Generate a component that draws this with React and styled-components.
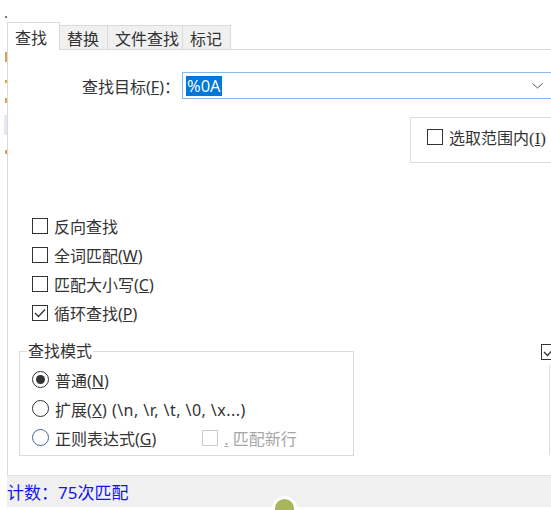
import styled, { createGlobalStyle } from "styled-components";

const GlobalStyle = createGlobalStyle`
  html, body {
    margin: 0;
    padding: 0;
    background: #ffffff;
  }
  body {
    font-family: "Noto Sans", "Noto Sans CJK SC", sans-serif;
    color: #222222;
  }
`;

const Page = styled.div`
  position: relative;
  width: 551px;
  height: 510px;
  display: flex;
  overflow: hidden;
  background: #ffffff;
  font-size: 16px;
`;

const Backdrop = styled.div`
  flex: none;
  width: 7px;
  display: flex;
  flex-direction: column;
  align-items: flex-end;
`;

const Mark = styled.span`
  display: block;
  width: ${(p) => p.w || 2}px;
  height: ${(p) => p.h}px;
  margin-top: ${(p) => p.top}px;
  background: ${(p) => p.color || "#e2a04a"};
`;

const Dialog = styled.div`
  flex: 1;
  min-width: 0;
  display: flex;
  flex-direction: column;
  padding-top: 22px;
`;

const TabBar = styled.div`
  display: flex;
  align-items: flex-end;
  height: 28px;
`;

const Tab = styled.div`
  box-sizing: border-box;
  flex: none;
  height: ${(p) => (p.active ? 28 : 25)}px;
  width: ${(p) => p.w}px;
  padding-left: 7px;
  display: flex;
  align-items: center;
  background: ${(p) => (p.active ? "#ffffff" : "#f0f0f0")};
  border: 1px solid #dadada;
  border-bottom: ${(p) => (p.active ? "none" : "1px solid #dadada")};
  border-left: ${(p) => (p.active ? "1px solid #dadada" : "none")};
  color: #333333;
  white-space: nowrap;
`;

const TabFiller = styled.div`
  flex: 1;
  border-bottom: 1px solid #dadada;
`;

const Panel = styled.div`
  height: 425px;
  border-left: 1px solid #dadada;
  display: flex;
  flex-direction: column;
  background: #ffffff;
`;

const FindRow = styled.div`
  display: flex;
  align-items: center;
  margin-top: 22px;
  height: 27px;
`;

const FieldLabel = styled.div`
  flex: none;
  width: 174px;
  padding-right: 2px;
  box-sizing: border-box;
  text-align: right;
  color: #333333;
  white-space: nowrap;
`;

const Combo = styled.div`
  box-sizing: border-box;
  flex: none;
  width: 375px;
  height: 27px;
  border: 1px solid #86b9ec;
  display: flex;
  align-items: center;
  padding-left: 3px;
`;

const Selected = styled.span`
  background: #0078d7;
  color: #ffffff;
  font-family: "Open Sans", "Noto Sans", sans-serif;
  font-size: 16.5px;
  line-height: 20px;
  padding: 0 1px;
`;

const Chevron = styled.svg`
  margin-left: auto;
  margin-right: 13px;
`;

const ScopeBox = styled.div`
  box-sizing: border-box;
  margin-top: 18px;
  margin-left: 402px;
  width: 160px;
  height: 46px;
  border: 1px solid #dcdcdc;
  padding: 4px 0 0 16px;
`;

const Options = styled.div`
  display: flex;
  flex-direction: column;
  margin-top: 48px;
  padding-left: 24px;
`;

const OptionRow = styled.label`
  display: flex;
  align-items: center;
  height: 29px;
  gap: 6px;
  white-space: nowrap;
  color: #333333;
`;

const Box = styled.span`
  box-sizing: border-box;
  flex: none;
  width: 16px;
  height: 16px;
  border: 1px solid ${(p) => (p.disabled ? "#cccccc" : "#333333")};
  background: #ffffff;
  display: flex;
  align-items: center;
  justify-content: center;
`;

const Round = styled.span`
  box-sizing: border-box;
  flex: none;
  width: 17px;
  height: 17px;
  border-radius: 50%;
  border: 1px solid ${(p) => p.tint || "#333333"};
  display: flex;
  align-items: center;
  justify-content: center;
  &::after {
    content: "";
    display: ${(p) => (p.checked ? "block" : "none")};
    width: 9px;
    height: 9px;
    border-radius: 50%;
    background: #333333;
  }
`;

const Latin = styled.span`
  font-family: ${(p) => (p.serif ? '"Liberation Serif", serif' : '"Noto Sans", sans-serif')};
  font-size: ${(p) => (p.serif ? 17 : 16)}px;
  letter-spacing: ${(p) => (p.wide ? 0.45 : 0)}px;
`;

const DimText = styled.span`
  color: #a6a6a6;
`;

const BottomRow = styled.div`
  display: flex;
  align-items: flex-start;
  margin-top: 14px;
`;

const ModeGroup = styled.fieldset`
  box-sizing: border-box;
  flex: none;
  margin: 0 0 0 11px;
  width: 335px;
  height: 115px;
  border: 1px solid #dcdcdc;
  padding: 4px 0 0 7px;
  legend {
    padding: 0 1px;
    line-height: 20px;
    color: #333333;
  }
`;

const RadioList = styled.div`
  display: flex;
  flex-direction: column;
  padding-left: 5px;
`;

const Spacer = styled.span`
  width: ${(p) => p.w}px;
  flex: none;
`;

const SideGroup = styled.div`
  flex: none;
  margin-left: 187px;
  margin-top: 3px;
  display: flex;
  flex-direction: column;
`;

const SideLine = styled.div`
  margin-top: 5px;
  margin-left: 8px;
  height: 90px;
  border-left: 1px solid #dcdcdc;
`;

const StatusBar = styled.div`
  box-sizing: border-box;
  height: 32px;
  background: #f0f0f0;
  border-top: 1px solid #e4e4e4;
  display: flex;
  align-items: center;
  color: #1414f0;
  font-size: 17px;
  white-space: nowrap;
`;

const Dot = styled.div`
  position: absolute;
  left: 272px;
  top: 496px;
  width: 19px;
  height: 19px;
  border-radius: 50%;
  background: #a9b55a;
  border: 3px solid #ffffff;
`;

const Check = () => (
  <svg width="12" height="10" viewBox="0 0 12 10">
    <polyline points="1,5 4.5,8.5 11,1.5" fill="none" stroke="#333" strokeWidth="1.3" />
  </svg>
);

const CheckBox = ({ checked, disabled }) => (
  <Box disabled={disabled}>{checked && <Check />}</Box>
);

export default function App() {
  return (
    <>
      <GlobalStyle />
      <Page>
        <Backdrop>
          <Mark top={16} h={2} color="#777" />
          <Mark top={34} h={10} />
          <Mark top={18} h={3} />
          <Mark top={15} h={5} />
          <Mark top={12} h={20} w={3} color="#e8e6f6" />
          <Mark top={15} h={4} />
        </Backdrop>
        <Dialog>
          <TabBar>
            <Tab active w={53}>查找</Tab>
            <Tab w={48}>替换</Tab>
            <Tab w={75}>文件查找</Tab>
            <Tab w={48}>标记</Tab>
            <TabFiller />
          </TabBar>
          <Panel>
            <FindRow>
              <FieldLabel>
                查找目标<Latin>(<u>F</u>)</Latin>：
              </FieldLabel>
              <Combo>
                <Selected>%0A</Selected>
                <Chevron width="11" height="6" viewBox="0 0 11 6">
                  <polyline points="0.5,0.5 5.5,5 10.5,0.5" fill="none" stroke="#555" strokeWidth="1" />
                </Chevron>
              </Combo>
            </FindRow>
            <ScopeBox>
              <OptionRow>
                <CheckBox />
                <span>选取范围内<Latin serif>(<u>I</u>)</Latin></span>
              </OptionRow>
            </ScopeBox>
            <Options>
              <OptionRow>
                <CheckBox />
                反向查找
              </OptionRow>
              <OptionRow>
                <CheckBox />
                <span>全词匹配<Latin>(<u>W</u>)</Latin></span>
              </OptionRow>
              <OptionRow>
                <CheckBox />
                <span>匹配大小写<Latin>(<u>C</u>)</Latin></span>
              </OptionRow>
              <OptionRow>
                <CheckBox checked />
                <span>循环查找<Latin>(<u>P</u>)</Latin></span>
              </OptionRow>
            </Options>
            <BottomRow>
              <ModeGroup>
                <legend>查找模式</legend>
                <RadioList>
                  <OptionRow>
                    <Round checked />
                    <span>普通<Latin>(<u>N</u>)</Latin></span>
                  </OptionRow>
                  <OptionRow>
                    <Round />
                    <span>扩展<Latin wide>(<u>X</u>) (\n, \r, \t, \0, \x...)</Latin></span>
                  </OptionRow>
                  <OptionRow>
                    <Round tint="#3d6a9e" />
                    <span>正则表达式<Latin>(<u>G</u>)</Latin></span>
                    <Spacer w={34} />
                    <CheckBox disabled />
                    <DimText>
                      <u>.</u> 匹配新行
                    </DimText>
                  </OptionRow>
                </RadioList>
              </ModeGroup>
              <SideGroup>
                <CheckBox checked />
                <SideLine />
              </SideGroup>
            </BottomRow>
          </Panel>
          <StatusBar>计数：75次匹配</StatusBar>
        </Dialog>
        <Dot />
      </Page>
    </>
  );
}
